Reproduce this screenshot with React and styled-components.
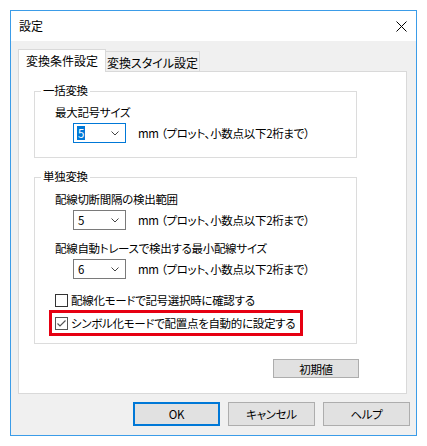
import React from 'react';
import styled, { createGlobalStyle } from 'styled-components';

const GlobalStyle = createGlobalStyle`
    body {
        margin: 0;
        background: #fff;
        font-family: "Noto Sans CJK JP", "Liberation Sans", sans-serif;
        font-size: 11.5px;
        color: #000;
    }
`;

const Window = styled.div`
    box-sizing: border-box;
    width: 407px;
    height: 426px;
    margin: 10px;
    border: 1px solid #3b9ce8;
    display: flex;
    flex-direction: column;
    background: #f0f0f0;
`;

const TitleBar = styled.div`
    height: 30px;
    flex: none;
    display: flex;
    align-items: center;
    padding-left: 8px;
    background: #fff;
    line-height: 14px;
    font-size: 12px;
`;

const CloseButton = styled.div`
    margin-left: auto;
    width: 30px;
    height: 30px;
    display: flex;
    align-items: center;
    justify-content: center;
`;

const Client = styled.div`
    flex: 1;
    display: flex;
    flex-direction: column;
    padding: 8px 6px 9px 7px;
    font-feature-settings: "palt";
    letter-spacing: -0.3px;
`;

const TabStrip = styled.div`
    display: flex;
    align-items: flex-start;
    height: 23px;
    margin-bottom: -1px;
    position: relative;
    z-index: 1;
`;

const Tab = styled.div`
    box-sizing: border-box;
    width: ${p => p.$width}px;
    height: ${p => (p.$active ? 23 : 20)}px;
    margin-top: ${p => (p.$active ? 0 : 2)}px;
    margin-left: ${p => (p.$active ? 0 : -1)}px;
    border: 1px solid #d9d9d9;
    border-bottom: none;
    background: ${p => (p.$active ? '#fff' : '#f0f0f0')};
    text-align: center;
    line-height: 14px;
    padding-top: 4px;
    font-size: 12px;
    letter-spacing: 0;
    white-space: nowrap;
`;

const Panel = styled.div`
    box-sizing: border-box;
    width: 389px;
    height: 323px;
    border: 1px solid #d9d9d9;
    background: #fff;
    padding: 0 0 15px 15px;
    display: flex;
    flex-direction: column;
`;

const Group = styled.div`
    box-sizing: border-box;
    width: 323px;
    margin-top: ${p => p.$top}px;
    border: 1px solid #dcdcdc;
    padding: 0 0 ${p => p.$bottom}px 20px;
    display: flex;
    flex-direction: column;
`;

const GroupTitle = styled.div`
    align-self: flex-start;
    margin: -9px 0 0 -14px;
    padding: 0 2px;
    background: #fff;
    line-height: 14px;
`;

const Label = styled.div`
    line-height: 14px;
    margin-top: ${p => p.$top}px;
    white-space: nowrap;
`;

const ComboRow = styled.div`
    display: flex;
    align-items: center;
    margin: 4px 0 0 18px;
    height: 20px;
`;

const Combo = styled.div`
    box-sizing: border-box;
    width: 53px;
    height: 20px;
    border: 1px solid ${p => (p.$focused ? '#0078d7' : '#7a7a7a')};
    background: #fff;
    display: flex;
    align-items: center;
    padding: 0 6px 0 3px;
`;

const ComboValue = styled.span`
    line-height: 14px;
    padding: 0 1px;
    background: ${p => (p.$selected ? '#0078d7' : 'transparent')};
    color: ${p => (p.$selected ? '#fff' : '#000')};
`;

const Chevron = styled.svg`
    margin-left: auto;
`;

const Unit = styled.span`
    margin-left: 12px;
    line-height: 14px;
    white-space: nowrap;
`;

const CheckRow = styled.label`
    display: flex;
    align-items: center;
    align-self: flex-start;
    gap: 3px;
    line-height: 14px;
    white-space: nowrap;
    margin-top: ${p => p.$top}px;
    ${p => p.$highlight && `
        margin-left: -6px;
        border: 3px solid #e60012;
        padding: 3px 5px 3px 3px;
    `}
`;

const Box = styled.span`
    box-sizing: border-box;
    width: 13px;
    height: 13px;
    border: 1px solid ${p => (p.$checked ? '#555' : '#333')};
    background: #fff;
    display: flex;
    align-items: center;
    justify-content: center;
`;

const ResetRow = styled.div`
    width: 325px;
    margin-top: 15px;
    display: flex;
    justify-content: flex-end;
`;

const Button = styled.div`
    box-sizing: border-box;
    width: ${p => p.$width}px;
    height: ${p => p.$height}px;
    background: #e1e1e1;
    border: ${p => (p.$default ? '2px solid #0078d7' : '1px solid #adadad')};
    display: flex;
    align-items: center;
    justify-content: center;
    line-height: 14px;
`;

const Footer = styled.div`
    margin-top: 8px;
    display: flex;
    justify-content: flex-end;
    gap: 8px;
`;

const UNIT_TEXT = 'mm （プロット、小数点以下2桁まで）';

const ComboField = ({ value, focused }) => (
    <ComboRow>
        <Combo $focused={focused}>
            <ComboValue $selected={focused}>{value}</ComboValue>
            <Chevron width="8" height="5" viewBox="0 0 8 5">
                <path d="M0.5 0.5 L4 4 L7.5 0.5" fill="none" stroke="#444" strokeWidth="1" />
            </Chevron>
        </Combo>
        <Unit>{UNIT_TEXT}</Unit>
    </ComboRow>
);

const Check = ({ checked, highlight, top, children }) => (
    <CheckRow $highlight={highlight} $top={top}>
        <Box $checked={checked}>
            {checked && (
                <svg width="11" height="11" viewBox="0 0 11 11">
                    <path d="M1.5 5.5 L4 8 L9.5 2.5" fill="none" stroke="#555" strokeWidth="1.2" />
                </svg>
            )}
        </Box>
        {children}
    </CheckRow>
);

export default function App() {
    return (
        <>
            <GlobalStyle />
            <Window>
                <TitleBar>
                    設定
                    <CloseButton>
                        <svg width="11" height="11" viewBox="0 0 11 11">
                            <path d="M0.5 0.5 L10.5 10.5 M10.5 0.5 L0.5 10.5" stroke="#000" strokeWidth="1" />
                        </svg>
                    </CloseButton>
                </TitleBar>
                <Client>
                    <TabStrip>
                        <Tab $active $width={88}>変換条件設定</Tab>
                        <Tab $width={95}>変換スタイル設定</Tab>
                    </TabStrip>
                    <Panel>
                        <Group $top={19} $bottom={14}>
                            <GroupTitle>一括変換</GroupTitle>
                            <Label $top={8}>最大記号サイズ</Label>
                            <ComboField value="5" focused />
                        </Group>
                        <Group $top={19} $bottom={7}>
                            <GroupTitle>単独変換</GroupTitle>
                            <Label $top={9}>配線切断間隔の検出範囲</Label>
                            <ComboField value="5" />
                            <Label $top={11}>配線自動トレースで検出する最小配線サイズ</Label>
                            <ComboField value="6" />
                            <Check top={14}>配線化モードで記号選択時に確認する</Check>
                            <Check top={3} checked highlight>シンボル化モードで配置点を自動的に設定する</Check>
                        </Group>
                        <ResetRow>
                            <Button $width={86} $height={19}>初期値</Button>
                        </ResetRow>
                    </Panel>
                    <Footer>
                        <Button $width={87} $height={24} $default>OK</Button>
                        <Button $width={87} $height={24}>キャンセル</Button>
                        <Button $width={87} $height={24}>ヘルプ</Button>
                    </Footer>
                </Client>
            </Window>
        </>
    );
}
